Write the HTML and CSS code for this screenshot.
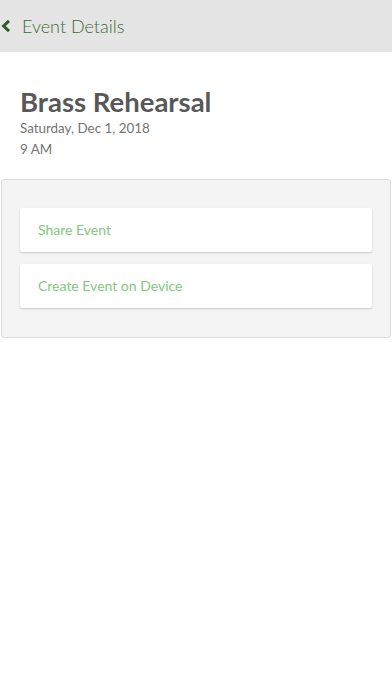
FILE: index.html
```html
<!DOCTYPE html>
<html lang="en">
<head>
    <meta charset="UTF-8">
    <meta name="viewport" content="width=device-width, initial-scale=1.0">
    <title>Event Details</title>
    <link rel="stylesheet" href="styles.css">
</head>
<body>
    <div class="topbar">
        <span class="back">
            <svg width="12" height="14" viewBox="0 0 12 14"><path d="M9 1.8 L3.6 7 L9 12.2" fill="none" stroke="#2f5a2a" stroke-width="3"/></svg>
        </span>
        <span class="topbar-title">Event Details</span>
    </div>
    <div class="event">
        <h1 class="event-name">Brass Rehearsal</h1>
        <div class="event-date">Saturday, Dec 1, 2018</div>
        <div class="event-time">9 AM</div>
    </div>
    <div class="actions">
        <div class="action">Share Event</div>
        <div class="action">Create Event on Device</div>
    </div>
</body>
</html>
```

FILE: styles.css
```css
* {
    margin: 0;
    padding: 0;
    box-sizing: border-box;
}
body {
    width: 392px;
    height: 696px;
    background: #fff;
    font-family: Lato, "Open Sans", sans-serif;
}

.topbar {
    display: flex;
    align-items: center;
    height: 52px;
    background-color: #e5e5e5;
}
.back {
    display: flex;
    width: 22px;
    padding-left: 0;
}
.topbar-title {
    font-size: 18px;
    font-weight: 300;
    color: #3d6a37;
}

.event {
    padding: 34px 20px 19px;
}
.event-name {
    font-size: 27.5px;
    font-weight: 700;
    line-height: 32px;
    color: #585858;
}
.event-date,
.event-time {
    font-size: 13.4px;
    line-height: 21px;
    color: #737373;
}

.actions {
    display: flex;
    flex-direction: column;
    gap: 12px;
    margin: 0 1px;
    padding: 28px 18px 29px;
    background-color: #f3f3f3;
    border: 1px solid #dcdcdc;
    border-radius: 3px;
}
.action {
    height: 44px;
    line-height: 44px;
    padding-left: 18px;
    background: #fff;
    border-radius: 2px;
    box-shadow: 0 1px 2px rgba(0, 0, 0, 0.18);
    font-size: 14px;
    color: #80c97a;
}
```
